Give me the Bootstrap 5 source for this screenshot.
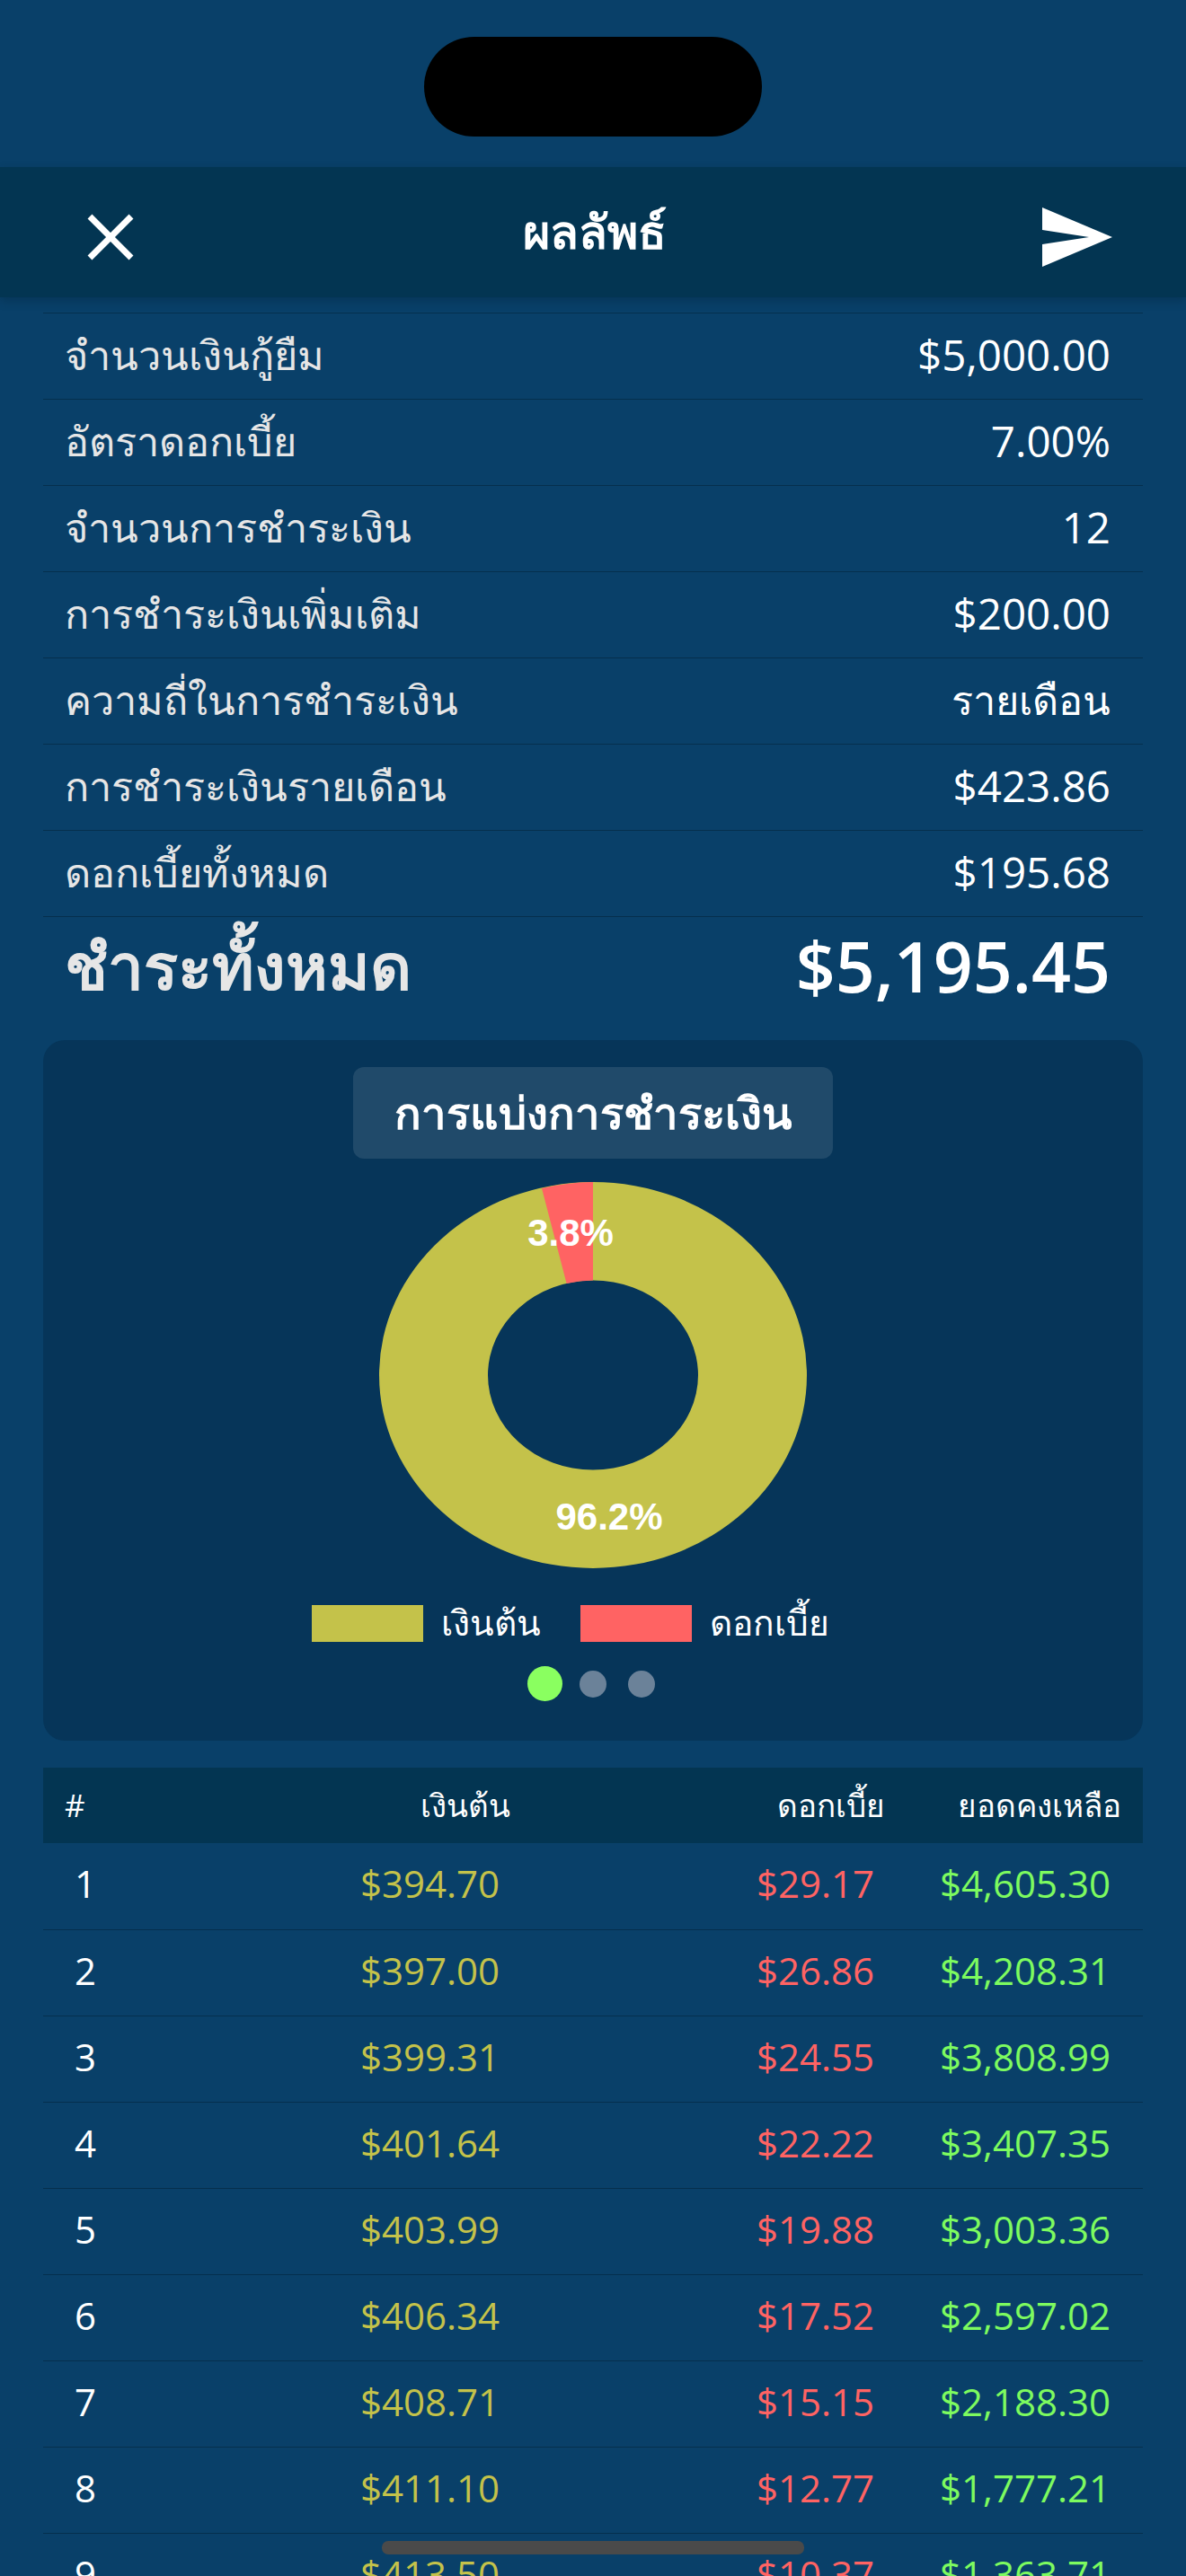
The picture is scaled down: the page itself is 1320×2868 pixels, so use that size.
<!doctype html>
<html lang="th">
<head>
<meta charset="utf-8">
<title>ผลลัพธ์</title>
<link rel="stylesheet" href="https://cdn.jsdelivr.net/npm/bootstrap@5.3.0/dist/css/bootstrap.min.css">
<style>
html, body { height: 100%; overflow: hidden; }
body { background: #094069; color: #fff; font-family: "Open Sans", "Noto Sans", sans-serif; position: relative; }
.status-area { height: 186px; padding-top: 41px; }
.notch { width: 376px; height: 111px; background: #000; border-radius: 56px; }
.top-bar { height: 145px; background: #033552; padding: 0 82px 0 97px; box-shadow: 0 4px 10px rgba(0,30,50,.3); position: relative; }
.top-bar svg { margin-top: 11px; }
.top-title { font-size: 52px; font-weight: 700; line-height: 1; margin: 0 0 4px 14px; }
.summary { margin: 17px 48px 0; }
.sum-row { height: 96px; padding: 0 36px 4px 24px; border-top: 1px solid #052f4d; font-size: 45px; color: #e6e6e6; }
.sum-row b { font-size: 47.5px; font-weight: 400; color: #fff; }
.sum-row b.word-val { font-size: 45px; }
.sum-total { height: 110px; font-size: 71px; font-weight: 700; border-top: 1px solid #052f4d; padding: 0 36px 0 24px; color: #e6e6e6; }
.sum-total b { font-size: 77px; font-weight: 600; color: #fff; }
.chart-panel { margin: 28px 48px 0; height: 780px; padding-top: 30px; background: #063559; border-radius: 24px; }
.chart-title { width: 534px; height: 102px; background: #204a6a; border-radius: 12px; font-size: 49px; font-weight: 700; }
.donut { display: block; width: 476px; height: 430px; margin-top: 26px; }
.donut text { font-family: "Liberation Sans", sans-serif; font-weight: 700; font-size: 42px; fill: #fff; }
.legend-row { margin-top: 41px; margin-left: -50px; font-family: "Liberation Sans", sans-serif; font-size: 39px; line-height: 41px; gap: 20px; }
.swatch { display: block; width: 124px; height: 41px; }
.swatch-next { margin-left: 24px; }
.tone-yellow { background: #c4c24a; }
.tone-red { background: #ff6363; }
.pager { margin-top: 27px; margin-left: -5px; gap: 24px; }
.pager span { display: block; width: 30px; height: 30px; border-radius: 50%; background: #6b8299; }
.pager span.on { width: 39px; height: 39px; background: #8aff60; margin-right: -5px; }
.schedule-wrap { margin: 30px 48px 0; }
.schedule { table-layout: fixed; width: 1224px; --bs-table-bg: transparent; --bs-table-color: #fff; --bs-table-border-color: #052f4d; margin: 0; }
.schedule th { height: 84px; background: #033552; color: #fff; font-size: 35px; font-weight: 500; padding: 0 12px 0 0; vertical-align: middle; text-align: right; border: 0; }
.schedule th:first-child { text-align: left; padding-left: 24px; }
.schedule th:last-child { padding-right: 24px; }
.schedule td { height: 96px; font-size: 42px; padding: 0 24px 6px 0; vertical-align: middle; text-align: right; border-bottom: 1px solid #052f4d; }
.schedule td:first-child { text-align: left; padding-left: 35px; }
.schedule td:last-child { padding-right: 36px; }
.schedule td.val-yellow { --bs-table-color: #c4c24a; color: #c4c24a; }
.schedule td.val-red { --bs-table-color: #ff6363; color: #ff6363; }
.schedule td.val-green { --bs-table-color: #7dfb5f; color: #7dfb5f; }
.home-bar { position: absolute; left: 425px; top: 2829px; width: 470px; height: 15px; border-radius: 7px; background: #4a4a4a; }
</style>
</head>
<body>
<div class="status-area d-flex justify-content-center"><div class="notch"></div></div>

<header class="top-bar d-flex align-items-center justify-content-between">
  <svg width="52" height="52" viewBox="0 0 52 52" aria-label="ปิด"><path d="M3 3 L49 49 M49 3 L3 49" stroke="#fff" stroke-width="7" fill="none"/></svg>
  <div class="top-title">ผลลัพธ์</div>
  <svg width="78" height="66" viewBox="0 0 78 66" aria-label="ส่ง"><path d="M0 0 L78 33 L0 66 L0 41 L52 33 L0 25 Z" fill="#fff"/></svg>
</header>

<section class="summary">
  <div class="sum-row d-flex align-items-center justify-content-between"><span>จำนวนเงินกู้ยืม</span><b>$5,000.00</b></div>
  <div class="sum-row d-flex align-items-center justify-content-between"><span>อัตราดอกเบี้ย</span><b>7.00%</b></div>
  <div class="sum-row d-flex align-items-center justify-content-between"><span>จำนวนการชำระเงิน</span><b>12</b></div>
  <div class="sum-row d-flex align-items-center justify-content-between"><span>การชำระเงินเพิ่มเติม</span><b>$200.00</b></div>
  <div class="sum-row d-flex align-items-center justify-content-between"><span>ความถี่ในการชำระเงิน</span><b class="word-val">รายเดือน</b></div>
  <div class="sum-row d-flex align-items-center justify-content-between"><span>การชำระเงินรายเดือน</span><b>$423.86</b></div>
  <div class="sum-row d-flex align-items-center justify-content-between"><span>ดอกเบี้ยทั้งหมด</span><b>$195.68</b></div>
  <div class="sum-total d-flex align-items-center justify-content-between"><span>ชำระทั้งหมด</span><b>$5,195.45</b></div>
</section>

<section class="chart-panel d-flex flex-column align-items-center">
  <div class="chart-title d-flex align-items-center justify-content-center">การแบ่งการชำระเงิน</div>
  <svg class="donut" viewBox="0 0 476 430">
    <path fill="#c4c24a" fill-rule="evenodd" d="M0 215 A238 215 0 1 1 476 215 A238 215 0 1 1 0 215 Z M121 215 A117 105.5 0 1 0 355 215 A117 105.5 0 1 0 121 215 Z"/>
    <path fill="#ff6363" d="M238 0 A238 215 0 0 0 181 7 L208.6 113 A117 105.5 0 0 1 238 109.5 Z"/>
    <text x="213" y="71" text-anchor="middle">3.8%</text>
    <text x="256" y="387" text-anchor="middle">96.2%</text>
  </svg>
  <div class="legend-row d-flex align-items-center">
    <span class="swatch tone-yellow"></span><span>เงินต้น</span>
    <span class="swatch swatch-next tone-red"></span><span>ดอกเบี้ย</span>
  </div>
  <div class="pager d-flex align-items-center"><span class="on"></span><span></span><span></span></div>
</section>

<section class="schedule-wrap">
  <table class="table schedule">
    <colgroup><col style="width:140px"><col style="width:392px"><col style="width:417px"><col style="width:275px"></colgroup>
    <thead><tr><th>#</th><th>เงินต้น</th><th>ดอกเบี้ย</th><th>ยอดคงเหลือ</th></tr></thead>
    <tbody>
      <tr><td>1</td><td class="val-yellow">$394.70</td><td class="val-red">$29.17</td><td class="val-green">$4,605.30</td></tr>
      <tr><td>2</td><td class="val-yellow">$397.00</td><td class="val-red">$26.86</td><td class="val-green">$4,208.31</td></tr>
      <tr><td>3</td><td class="val-yellow">$399.31</td><td class="val-red">$24.55</td><td class="val-green">$3,808.99</td></tr>
      <tr><td>4</td><td class="val-yellow">$401.64</td><td class="val-red">$22.22</td><td class="val-green">$3,407.35</td></tr>
      <tr><td>5</td><td class="val-yellow">$403.99</td><td class="val-red">$19.88</td><td class="val-green">$3,003.36</td></tr>
      <tr><td>6</td><td class="val-yellow">$406.34</td><td class="val-red">$17.52</td><td class="val-green">$2,597.02</td></tr>
      <tr><td>7</td><td class="val-yellow">$408.71</td><td class="val-red">$15.15</td><td class="val-green">$2,188.30</td></tr>
      <tr><td>8</td><td class="val-yellow">$411.10</td><td class="val-red">$12.77</td><td class="val-green">$1,777.21</td></tr>
      <tr><td>9</td><td class="val-yellow">$413.50</td><td class="val-red">$10.37</td><td class="val-green">$1,363.71</td></tr>
    </tbody>
  </table>
</section>

<div class="home-bar"></div>
</body>
</html>
